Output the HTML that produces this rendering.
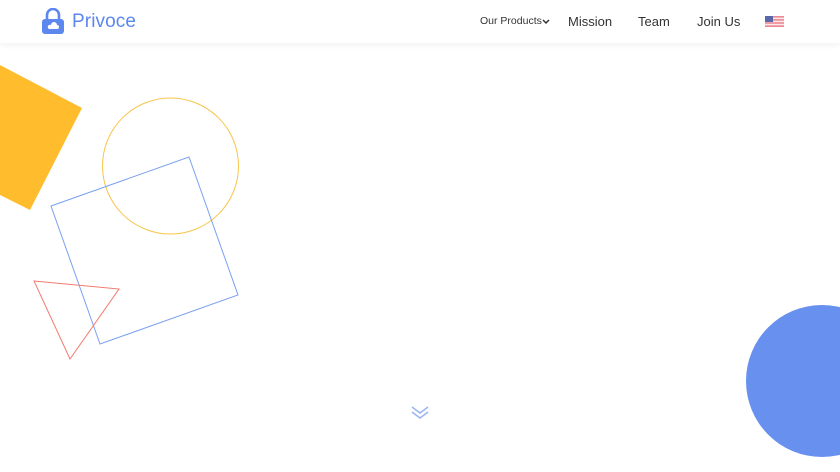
<!DOCTYPE html>
<html><head><meta charset="utf-8"><style>
body{margin:0;width:840px;height:472px;overflow:hidden;background:#fff;font-family:"Liberation Sans",sans-serif;position:relative}
.hdr{position:absolute;left:0;top:0;width:840px;height:43px;background:#fff;box-shadow:0 2px 6px rgba(0,0,0,0.06);z-index:2}
.logo{position:absolute;left:72px;top:11px;font-size:19px;color:#5b87ee;letter-spacing:0.1px}
.nav{position:absolute;top:14px;font-size:13px;color:#333}
</style></head><body>
<svg width="840" height="472" style="position:absolute;left:0;top:0">
<polygon points="0,65 82,108 30,210 0,195" fill="#ffbd2e"/>
<circle cx="170.5" cy="166" r="68" fill="none" stroke="#f8c44a" stroke-width="1"/>
<polygon points="51,206 189,157 238,295 100,344" fill="none" stroke="#7aa0f2" stroke-width="1"/>
<polygon points="34,281 119,289 70,359" fill="none" stroke="#f27a6e" stroke-width="1"/>
<circle cx="822" cy="381" r="76" fill="#6891ef"/>
<path d="M412,407 L420,413 L428,407 M412,412 L420,418 L428,412" fill="none" stroke="#9bb5f3" stroke-width="1.5"/>
</svg>
<div class="hdr">
<svg width="24" height="26" style="position:absolute;left:41px;top:8px" viewBox="0 0 24 26">
<path d="M6,11 V7 a6,6 0 0 1 12,0 V11" fill="none" stroke="#5b87ee" stroke-width="2.6"/>
<rect x="1" y="11" width="22" height="15" rx="3" fill="#5b87ee"/>
<path d="M8,21 h8 a2,2 0 0 0 0,-4 a3,3 0 0 0 -6,0 a2,2 0 0 0 -2,4z" fill="#fff"/>
</svg>
<div class="logo">Privoce</div>
<div class="nav" style="left:480px;font-size:10.5px;top:15px">Our Products</div>
<svg width="8" height="6" style="position:absolute;left:542px;top:19px"><path d="M1,1 L4,4 L7,1" fill="none" stroke="#333" stroke-width="1.5"/></svg>
<div class="nav" style="left:568px">Mission</div>
<div class="nav" style="left:638px">Team</div>
<div class="nav" style="left:697px">Join Us</div>
<svg width="19" height="11" style="position:absolute;left:765px;top:16px">
<rect width="19" height="11" fill="#ec8a94"/>
<rect y="1.6" width="19" height="1.5" fill="#fbe6e8"/><rect y="4.7" width="19" height="1.5" fill="#fbe6e8"/><rect y="7.8" width="19" height="1.5" fill="#fbe6e8"/>
<rect width="8" height="6" fill="#5a68a8"/>
</svg>
</div>
</body></html>
